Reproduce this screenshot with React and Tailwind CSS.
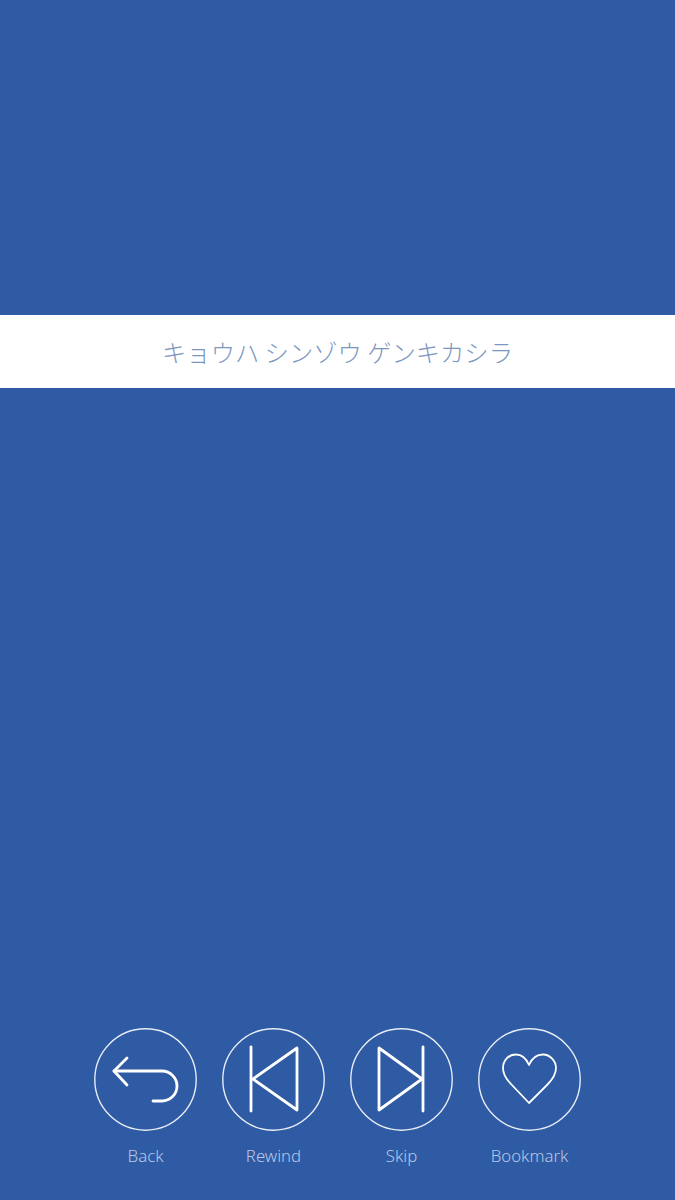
import React from 'react';

const Ring = () => <circle cx="51.500" cy="51.500" r="50.700" stroke="#e6ecf6" strokeWidth="1.400" fill="none" />;

const BackIcon = () => (
    <svg viewBox="0 0 103 103" className="w-full h-full" fill="none" stroke="white" strokeWidth="2.800" strokeLinecap="round" strokeLinejoin="round">
        <Ring />
        <path d="M33 30 L20 43 L33 57" />
        <path d="M20 43 H68 A15 15 0 0 1 68 73 H59" />
    </svg>
);

const RewindIcon = () => (
    <svg viewBox="0 0 103 103" className="w-full h-full" fill="none" stroke="white" strokeWidth="2.800" strokeLinecap="round" strokeLinejoin="round">
        <Ring />
        <path d="M29 19 V83" />
        <path d="M75 20 V82 L31 51 Z" />
    </svg>
);

const SkipIcon = () => (
    <svg viewBox="0 0 103 103" className="w-full h-full" fill="none" stroke="white" strokeWidth="2.800" strokeLinecap="round" strokeLinejoin="round">
        <Ring />
        <path d="M73 19 V83" />
        <path d="M29 20 V82 L72 51 Z" />
    </svg>
);

const HeartIcon = () => (
    <svg viewBox="0 0 103 103" className="w-full h-full" fill="none" stroke="white" strokeWidth="1.800" strokeLinejoin="round">
        <Ring />
        <path d="M51 37 C48 30 43 26.500 38 26.500 C30 26.500 25 33 25 40 C25 46 28 51 33 56 L51 75 L69 57 C75 51 78 46 78 40 C78 33 72 26.500 65 26.500 C59 26.500 54 30 51 37 Z" />
    </svg>
);

const controls = [
    { label: 'Back', icon: <BackIcon /> },
    { label: 'Rewind', icon: <RewindIcon /> },
    { label: 'Skip', icon: <SkipIcon /> },
    { label: 'Bookmark', icon: <HeartIcon /> },
];

const App = () => {
    return (
        <div className="w-[675px] h-[1200px] bg-[#2f5aa4] flex flex-col overflow-hidden font-['Noto_Sans','Noto_Sans_CJK_JP',sans-serif]">
            <div className="mt-[315px] h-[73px] pt-[2px] bg-white flex items-center justify-center">
                <span className="text-[24.300px] font-extralight text-[#7d97bf] font-['Noto_Sans_CJK_JP',sans-serif]">
                    キョウハ シンゾウ ゲンキカシラ
                </span>
            </div>

            <div className="mt-[640px] flex justify-center gap-[25px]">
                {controls.map((item) => (
                    <div key={item.label} className="w-[103px] flex flex-col items-center">
                        <button className="w-[103px] h-[103px]">
                            {item.icon}
                        </button>
                        <span className="mt-[14px] text-[16.800px] leading-[22px] font-light text-[#b6c8e7] whitespace-nowrap">
                            {item.label}
                        </span>
                    </div>
                ))}
            </div>
        </div>
    );
};

export default App;
